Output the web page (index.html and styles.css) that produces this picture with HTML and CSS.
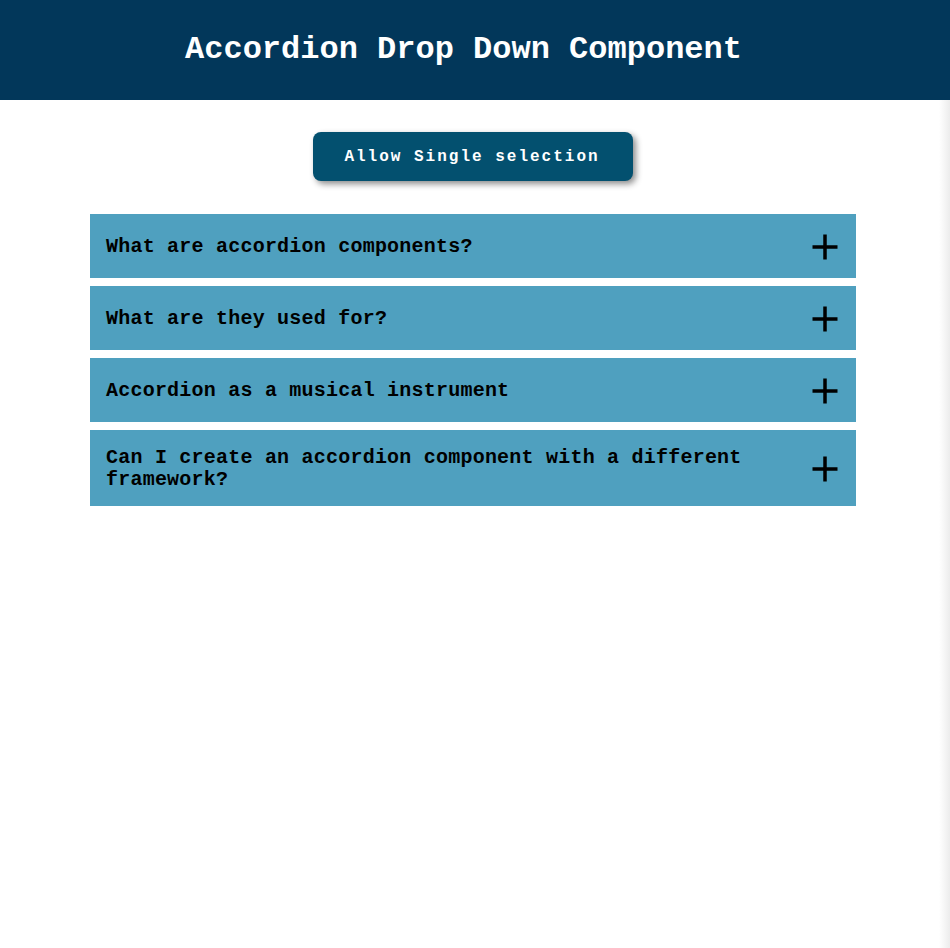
FILE: index.html
```html
<!DOCTYPE html>
<html lang="en">
<head>
<meta charset="utf-8">
<title>Accordion Drop Down Component</title>
<link rel="stylesheet" href="styles.css">
</head>
<body>
  <header class="site-header">
    <h1 class="title">Accordion Drop Down Component</h1>
  </header>
  <main class="page">
    <button class="mode-btn" type="button">Allow Single selection</button>
    <section class="accordion">
      <div class="item">
        <span class="question">What are accordion components?</span>
        <svg class="plus" viewBox="0 0 28 28" aria-hidden="true"><path d="M14 1.5v25M1.5 14h25"/></svg>
      </div>
      <div class="item">
        <span class="question">What are they used for?</span>
        <svg class="plus" viewBox="0 0 28 28" aria-hidden="true"><path d="M14 1.5v25M1.5 14h25"/></svg>
      </div>
      <div class="item">
        <span class="question">Accordion as a musical instrument</span>
        <svg class="plus" viewBox="0 0 28 28" aria-hidden="true"><path d="M14 1.5v25M1.5 14h25"/></svg>
      </div>
      <div class="item">
        <span class="question">Can I create an accordion component with a different framework?</span>
        <svg class="plus" viewBox="0 0 28 28" aria-hidden="true"><path d="M14 1.5v25M1.5 14h25"/></svg>
      </div>
    </section>
  </main>
</body>
</html>
```
FILE: styles.css
```css
html, body {
  margin: 0;
  padding: 0;
}
body {
  min-height: 948px;
  font-family: "Liberation Mono", "Courier New", monospace;
  background: linear-gradient(to right, #ffffff calc(100% - 11px), #ececec 100%);
}
.site-header {
  height: 100px;
  background: #02375a;
  display: flex;
  align-items: center;
  justify-content: center;
}
.title {
  margin: 0;
  padding-right: 23px;
  color: #ffffff;
  font-size: 32px;
  font-weight: bold;
  line-height: 1;
}
.page {
  width: 946px;
  display: flex;
  flex-direction: column;
  align-items: center;
  padding-top: 32px;
}
.mode-btn {
  width: 320px;
  height: 49px;
  padding: 0 2px 0 0;
  border: none;
  border-radius: 8px;
  background: #03506f;
  color: #ffffff;
  font-family: "Liberation Mono", "Courier New", monospace;
  font-size: 16px;
  font-weight: bold;
  letter-spacing: 2px;
  box-shadow: 3px 3px 6px rgba(0, 0, 0, 0.45);
}
.accordion {
  width: 766px;
  margin-top: 33px;
  display: flex;
  flex-direction: column;
  gap: 8px;
}
.item {
  display: flex;
  align-items: center;
  justify-content: space-between;
  gap: 24px;
  padding: 17px 17px 15px 16px;
  background: #4fa0bf;
  min-height: 32px;
}
.question {
  color: #000000;
  font-size: 20px;
  font-weight: bold;
  line-height: 22px;
  letter-spacing: 0.22px;
}
.plus {
  flex: none;
  width: 28px;
  height: 28px;
  fill: none;
  stroke: #000000;
  stroke-width: 3.5;
}
```
